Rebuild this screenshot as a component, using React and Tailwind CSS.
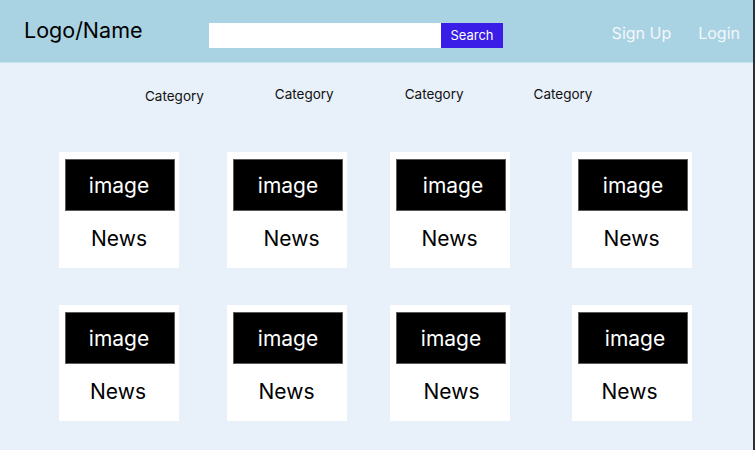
import React from 'react';

const font = { fontFamily: 'Inter, "Noto Sans", sans-serif' };

const rows = [
  [
    { ml: 'ml-[59px]', img: '-ml-[2px]', news: '-ml-[2px]' },
    { ml: 'ml-[48px]', img: 'ml-0', news: 'ml-[7px]' },
    { ml: 'ml-[43px]', img: 'ml-[4px]', news: '-ml-[3px]' },
    { ml: 'ml-[62px]', img: 'ml-0', news: '-ml-[3px]' },
  ],
  [
    { ml: 'ml-[59px]', img: '-ml-[2px]', news: '-ml-[4px]' },
    { ml: 'ml-[48px]', img: 'ml-0', news: '-ml-[3px]' },
    { ml: 'ml-[43px]', img: 'ml-0', news: 'ml-[1px]' },
    { ml: 'ml-[62px]', img: 'ml-[4px]', news: '-ml-[7px]' },
  ],
];

function NewsCard({ card }) {
  return (
    <div className={`${card.ml} flex h-[116px] w-[120px] shrink-0 flex-col items-center bg-white pl-[2px] pt-[7px]`}>
      <div className="flex h-[52px] w-[110px] items-center justify-center border border-[#5a5a5a] bg-black">
        <span className={`${card.img} text-[21px] leading-none text-white`}>image</span>
      </div>
      <span className={`${card.news} mt-[17px] text-[21px] leading-none text-black`}>News</span>
    </div>
  );
}

export default function App() {
  return (
    <div className="flex h-[450px] w-[755px] overflow-hidden" style={font}>
      <div className="flex h-full w-[753px] flex-col bg-[#e8f0fa]">
        <header className="flex h-[63px] shrink-0 items-start border-b border-[#c4e1ee] bg-[#a9d3e3]">
          <div className="ml-[24px] mt-[17px] w-[185px] text-[21.5px] leading-[26px] text-black">Logo/Name</div>
          <div className="mt-[23px] flex h-[25px]">
            <div className="w-[232px] bg-white"></div>
            <button className="flex w-[62px] items-center justify-center bg-[#3a1de6] pt-[1px] text-[13px] text-white">
              Search
            </button>
          </div>
          <nav className="ml-auto mr-[13px] mt-[22px] flex items-center gap-[27px] text-[16px] leading-[22px] text-[#f3f7fa]">
            <span>Sign Up</span>
            <span>Login</span>
          </nav>
        </header>

        <div className="flex h-[64px] items-start pt-[21px] text-[13.5px] text-[#111]">
          <span className="ml-[145px] mt-[2px]">Category</span>
          <span className="ml-[71px]">Category</span>
          <span className="ml-[71px]">Category</span>
          <span className="ml-[70px]">Category</span>
        </div>

        <div className="mt-[25px] flex flex-col gap-[37px]">
          {rows.map((row, i) => (
            <div key={i} className="flex">
              {row.map((card, j) => (
                <NewsCard key={j} card={card} />
              ))}
            </div>
          ))}
        </div>
      </div>
      <div className="h-full w-[2px] bg-[#2b2f38]"></div>
    </div>
  );
}
